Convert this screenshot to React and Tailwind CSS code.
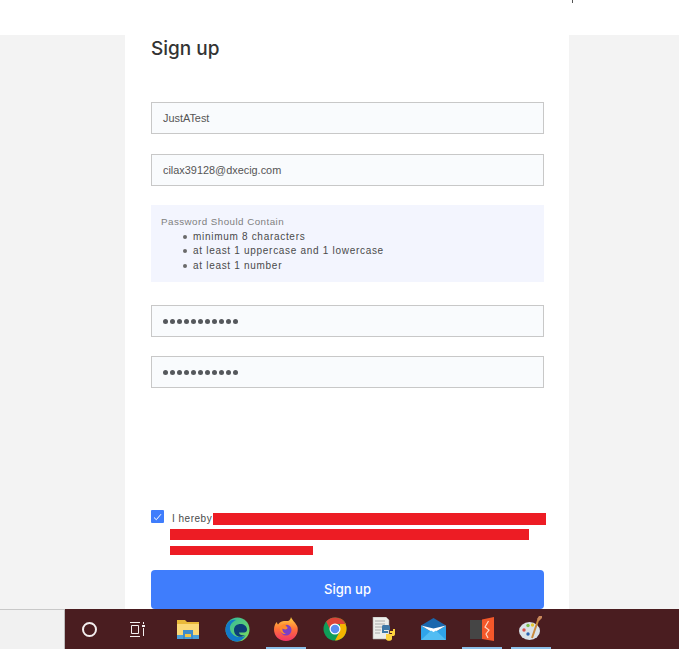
import React from "react";

const sans = "font-['Liberation_Sans',Arial,sans-serif]";

function Field({ value, dots, className = "" }) {
  return (
    <div className={`h-8 w-[393px] border border-[#c8c8c8] bg-[#f9fbfd] pl-[11px] flex items-center text-[#555] ${className}`}>
      {dots ? (
        <div className="flex gap-[2px]">
          {Array.from({ length: 11 }).map((_, i) => (
            <span key={i} className="block w-[5px] h-[5px] rounded-full bg-[#55585c]" />
          ))}
        </div>
      ) : (
        <span className="text-[10.900px] leading-none pt-[1px]">{value}</span>
      )}
    </div>
  );
}

function Folder() {
  return (
    <svg width="22" height="19" viewBox="0 0 22 19">
      <path d="M0 0h8l2 2h12v17H0z" fill="#e9b93a" />
      <path d="M0 4h22v15H0z" fill="#fbd977" />
      <path d="M0 15h22v4H0z" fill="#4b9fd8" />
      <path d="M6 10h10v9h-2v-5H8v5H6z" fill="#3f8bc9" />
      <rect x="8" y="14" width="6" height="3" fill="#f4c542" />
    </svg>
  );
}
function Edge() {
  return (
    <svg width="25" height="25" viewBox="0 0 25 25">
      <defs>
        <linearGradient id="eg" x1="0" y1="0" x2="1" y2="1">
          <stop offset="0" stopColor="#2fb8a0" />
          <stop offset="1" stopColor="#7ddc5b" />
        </linearGradient>
      </defs>
      <circle cx="12.500" cy="12.500" r="12" fill="url(#eg)" />
      <path d="M.5 12.500C.5 6 6 1.500 11 3 7 5 4.500 8 5 12c.6 5 5.500 8.500 11 8 2 0 4-1 5-2-2.500 4.500-6.500 6.500-9.500 6.500C5.500 24.500.5 19 .5 12.500z" fill="#1279c9" />
      <path d="M9 13c0-4 3-6 6.500-6s6 2 6.500 5c.3 2-1 3.500-3 3.500h-5c0 2 2.500 3.500 6 2.500-2.500 2-6 2.500-8.500.5C10 17.500 9 15.500 9 13z" fill="#0c3f78" />
    </svg>
  );
}
function Firefox() {
  return (
    <svg width="24" height="24" viewBox="0 0 24 24">
      <defs>
        <linearGradient id="ff" x1="0.5" y1="0" x2="0.5" y2="1">
          <stop offset="0" stopColor="#ffd43f" />
          <stop offset="0.5" stopColor="#ff7139" />
          <stop offset="1" stopColor="#f0336a" />
        </linearGradient>
      </defs>
      <path d="M17 0c1 3 5 6 6.500 10 1.500 7-3.500 14-11.500 14C5 24 0 19 0 12.500 0 9 1.500 6 3 5c0 1 .5 2 1 2.500C6 4.500 8.500 4 10 4c3 0 6 1 7-4z" fill="url(#ff)" />
      <circle cx="12" cy="13" r="5.500" fill="#7b3fc4" />
      <path d="M6 10c2-3 6-4 9-3-2 0-3 1-3.500 2 2 .5 2.500 2 1.500 3-2 1-4 0-4.500-.5C8 13 9 16 12 17c-4 .5-7-3-6-7z" fill="#ff8a2b" />
    </svg>
  );
}
function Chrome() {
  return (
    <svg width="24" height="24" viewBox="0 0 24 24">
      <circle cx="12" cy="12" r="11.500" fill="#0f9d58" />
      <path d="M12 .5a11.500 11.500 0 0 1 11.500 11.500c0 6.400-5.200 11.500-11.500 11.500L17 14V7h6A11.500 11.500 0 0 0 12 .5z" fill="#f4b400" />
      <path d="M3.200 4.500A11.500 11.500 0 0 1 12 .5a11.500 11.500 0 0 1 10.400 6.500H12a5 5 0 0 0-5 5.500z" fill="#db4437" />
      <circle cx="12" cy="12" r="5.500" fill="#fff" />
      <circle cx="12" cy="12" r="4.300" fill="#5a8df0" />
    </svg>
  );
}
function PyFile() {
  return (
    <svg width="24" height="24" viewBox="0 0 24 24">
      <path d="M1 0h13l3 3v19H1z" fill="#ededea" stroke="#a9a9a6" strokeWidth="0.6" />
      <path d="M3 4h10M3 7h10M3 10h7M3 13h6M3 16h5" stroke="#9a9a9a" strokeWidth="0.8" />
      <path d="M11 8h5c1.500 0 2 1 2 2v3h-6v1h4v2h-6v-6c0-1 .3-2 1-2z" fill="#3f78a8" />
      <path d="M23 12v5c0 1.500-1 2-2 2h-1v3c0 1-1.500 1.800-3 1.800s-3-.8-3-1.800v-5h6v-1h-2v-2h3v-2h2z" fill="#fdd23e" />
    </svg>
  );
}
function Mail() {
  return (
    <svg width="25" height="23" viewBox="0 0 25 23">
      <path d="M12.500 0 25 7.500 12.500 14 0 7.500z" fill="#1a67ad" />
      <path d="M0 7.500 12.500 15 25 7.500V22H0z" fill="#2fa4ea" />
      <path d="M0 7.500 12.500 15 25 7.500l-12.500 3z" fill="#fff" />
      <path d="M0 22 10 12.500l2.500 1.500 2.500-1.500L25 22z" fill="#52bdf3" />
    </svg>
  );
}
function Zap() {
  return (
    <svg width="24" height="24" viewBox="0 0 24 24">
      <path d="M0 3h13v19H0z" fill="#454545" />
      <path d="M12 2.500 24 0v24l-12-2z" fill="#f4582a" />
      <path d="M18.500 4l-3.500 6 4 3-3 4 2 4" fill="none" stroke="#ffd9c4" strokeWidth="1.200" />
    </svg>
  );
}
function Palette() {
  return (
    <svg width="24" height="26" viewBox="0 0 24 26">
      <ellipse cx="10.500" cy="15" rx="10.500" ry="9" fill="#d9e2e8" />
      <circle cx="5" cy="14" r="1.700" fill="#d9534a" />
      <circle cx="9" cy="9.500" r="1.700" fill="#7cc04b" />
      <circle cx="13.500" cy="9" r="1.700" fill="#e3c62f" />
      <circle cx="9" cy="18" r="1.700" fill="#2a62b0" />
      <path d="M19.500 3 13 22" stroke="#c98a3c" strokeWidth="2" />
      <path d="M18 3l2-3h3v2l-3 3z" fill="#c9875a" />
    </svg>
  );
}

function TaskIcon({ children, active }) {
  return (
    <div className="relative w-[40px] h-[40px] mr-[9px] flex items-center justify-center">
      {children}
      {active && <span className="absolute left-0 right-0 bottom-0 h-[2px] bg-[#8cbfe8]" />}
    </div>
  );
}

function Rule({ children }) {
  return (
    <li className="flex items-center gap-[6px]">
      <span className="block w-[4px] h-[4px] rounded-full bg-[#6a6a6a]" />
      {children}
    </li>
  );
}

export default function App() {
  return (
    <div className={`w-[679px] h-[649px] overflow-hidden flex flex-col bg-white ${sans}`}>
      <header className="h-[35px] shrink-0 bg-white flex justify-end pr-[106px]">
        <span className="block w-px h-[3px] bg-[#555]" />
      </header>
      <main className="h-[574px] shrink-0 bg-[#f3f3f3]">
        <section className="ml-[125px] w-[444px] h-full bg-white px-[26px] flex flex-col items-start">
          <h1 className="font-['Inter',sans-serif] font-medium text-[#333] text-[19px] leading-[26px] mt-[1px]">Sign up</h1>
          <Field value="JustATest" className="mt-[40px]" />
          <Field value="cilax39128@dxecig.com" className="mt-[20px]" />
          <div className="mt-[19px] w-[393px] h-[77px] bg-[#f3f5fe] pl-[10px] pt-[10px] text-[10px] leading-[14.500px] tracking-[0.7px] text-[#4a4a4a]">
            <p className="text-[#808080] text-[9.800px] tracking-[0.45px]">Password Should Contain</p>
            <ul className="pl-[22px]">
              <Rule>minimum 8 characters</Rule>
              <Rule>at least 1 uppercase and 1 lowercase</Rule>
              <Rule>at least 1 number</Rule>
            </ul>
          </div>
          <Field dots className="mt-[23px]" />
          <Field dots className="mt-[19px]" />
          <div className="mt-[122px] flex items-start">
            <span className="w-[13px] h-[13px] bg-[#3f7dfc] flex items-center justify-center rounded-[1px]">
              <svg width="9" height="8" viewBox="0 0 9 8"><path d="M1 4.500 3.300 6.700 8 1.200" fill="none" stroke="#fff" strokeWidth="1" /></svg>
            </span>
            <div className="ml-[6px] w-[380px] -mr-[5px]">
              <div className="flex items-center h-[12px] mt-[3px] ml-[2px]">
                <span className="text-[10px] tracking-[0.5px] text-[#4a4a4a] leading-none">I hereby</span>
                <span className="block ml-[1px] w-[333px] h-[12px] bg-[#ed1c24]" />
              </div>
              <div className="mt-[4px] w-[359px] h-[11px] bg-[#ed1c24]" />
              <div className="mt-[6px] w-[143px] h-[9px] bg-[#ed1c24]" />
            </div>
          </div>
          <button className="mt-[15px] w-[393px] h-[39px] rounded-[4px] bg-[#3f7dfc] text-white font-['Inter',sans-serif] font-medium text-[13px]">Sign up</button>
        </section>
      </main>
      <footer className="h-[40px] shrink-0 flex">
        <div className="w-[65px] bg-[#f1f1f1] border-t border-t-[#c8c8c8] border-r border-r-[#bdbdbd]" />
        <div className="flex-1 bg-[#4a1d20] flex items-center">
          <div className="w-[48px] flex justify-center">
            <span className="block w-[15px] h-[15px] rounded-full border-2 border-[#f3eeee]" />
          </div>
          <div className="w-[48px] flex justify-center">
            <svg width="16" height="15" viewBox="0 0 16 15" fill="none" stroke="#f3eeee" strokeWidth="1">
              <path d="M1 .5h10M1 14.500h10M2.500 3.500h7v8h-7zM14.500 0v2M14.500 6v8" />
              <rect x="13" y="3" width="3" height="2" fill="#f3eeee" stroke="none" />
            </svg>
          </div>
          <div className="w-[7px]" />
          <TaskIcon><Folder /></TaskIcon>
          <TaskIcon><Edge /></TaskIcon>
          <TaskIcon active><Firefox /></TaskIcon>
          <TaskIcon><Chrome /></TaskIcon>
          <TaskIcon><PyFile /></TaskIcon>
          <TaskIcon><Mail /></TaskIcon>
          <TaskIcon active><Zap /></TaskIcon>
          <TaskIcon active><Palette /></TaskIcon>
        </div>
      </footer>
    </div>
  );
}
